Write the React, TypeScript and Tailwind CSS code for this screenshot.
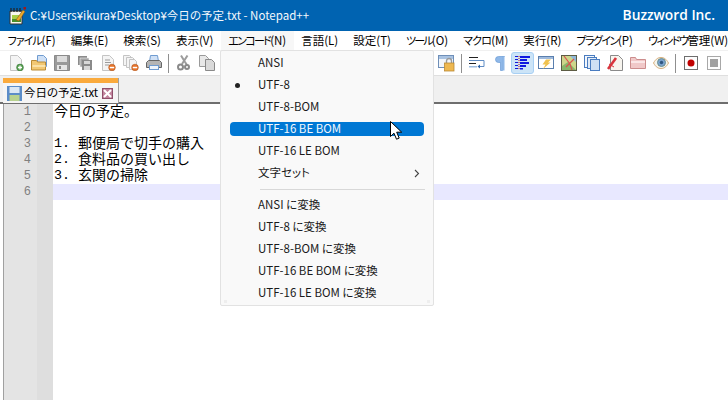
import React from "react";

const Svg = ({ children, w = 16, h = 16 }: { children: React.ReactNode; w?: number; h?: number }) => (
  <svg width={w} height={h} viewBox={`0 0 ${w} ${h}`} className="block shrink-0">
    {children}
  </svg>
);

const Page = ({ fill = "#f4f4f4" }: { fill?: string }) => (
  <path d="M2.5.5h7l4 4v11h-11z" fill={fill} stroke="#c4c4c4" />
);
const Minus = () => (
  <>
    <circle cx="12" cy="12.5" r="3.3" fill="#e8742a" stroke="#b0561c" strokeWidth=".6" />
    <rect x="9.8" y="11.8" width="4.4" height="1.5" fill="#fff" />
  </>
);

const icons: Record<string, React.ReactNode> = {
  newDoc: (
    <Svg>
      <Page />
      <circle cx="12" cy="12.5" r="3.4" fill="#5aa352" stroke="#37733a" strokeWidth=".6" />
      <path d="M10 12.5h4M12 10.5v4" stroke="#fff" strokeWidth="1.3" />
    </Svg>
  ),
  open: (
    <Svg>
      <path d="M6.5 .5h6l3 3v8h-9z" fill="#cfe0f5" stroke="#6f9bd0" />
      <path d="M.5 5.5h5l1 1.500h8v8h-14z" fill="#f2c873" stroke="#b98a35" />
      <path d="M1.500 10h13v2h-13z" fill="#fae2a8" />
    </Svg>
  ),
  save: (
    <Svg>
      <path d="M.5 .5h15v15h-15z" fill="#9a9a9a" stroke="#8a8a8a" />
      <rect x="3" y="1" width="10" height="6" fill="#dcdcdc" />
      <rect x="3" y="10" width="10" height="5" fill="#e6e6e6" />
      <rect x="5" y="11" width="2" height="3" fill="#8a8a8a" />
    </Svg>
  ),
  saveAll: (
    <Svg>
      <path d="M1 1h9v9h-9z" fill="#8c8c8c" />
      <path d="M3 3h9v9h-9z" fill="#a5a5a5" stroke="#f4f4f4" strokeWidth=".6" />
      <path d="M5 5h10v10h-10z" fill="#8a8a8a" />
      <rect x="7" y="6" width="6" height="3" fill="#d8d8d8" />
      <rect x="7" y="11" width="6" height="4" fill="#d8d8d8" />
    </Svg>
  ),
  close: (
    <Svg>
      <Page />
      <path d="M5 5h5M5 7.500h6M5 10h4" stroke="#9a9a9a" />
      <Minus />
    </Svg>
  ),
  closeAll: (
    <Svg>
      <path d="M.5 .5h6l2 2v8h-8z" fill="#f4f4f4" stroke="#c4c4c4" />
      <path d="M3.500 2.500h6l2 2v8h-8z" fill="#f4f4f4" stroke="#c4c4c4" />
      <path d="M6.500 4.500h5l2 2v8h-7z" fill="#f4f4f4" stroke="#c4c4c4" />
      <Minus />
    </Svg>
  ),
  print: (
    <Svg>
      <path d="M4.500 .5h7l1 6h-9z" fill="#cfe0f5" stroke="#6f9bd0" />
      <path d="M.5 7.500l2-2h11l2 2v5h-15z" fill="#b4b4b4" stroke="#666" />
      <rect x="3.500" y="10.500" width="9" height="4" fill="#eef4fb" stroke="#6f9bd0" />
    </Svg>
  ),
  cut: (
    <Svg>
      <path d="M11.500 .5L6 9M5 .5L9 7l2 3" stroke="#9c9c9c" strokeWidth="2" fill="none" />
      <circle cx="4.500" cy="12" r="2.500" fill="none" stroke="#8a8a8a" strokeWidth="2" />
      <circle cx="11" cy="12" r="2" fill="none" stroke="#8a8a8a" strokeWidth="2" />
    </Svg>
  ),
  copy: (
    <Svg>
      <path d="M.5 .5h6l3 3v8h-9z" fill="#e8e8e8" stroke="#9a9a9a" />
      <path d="M6.500 4.500h6l3 3v8h-9z" fill="#dadada" stroke="#8a8a8a" />
    </Svg>
  ),
  lock: (
    <Svg w={17} h={17}>
      <rect x=".5" y=".5" width="15" height="12" fill="#f2f6fb" stroke="#6f8fb8" />
      <rect x="1" y="1" width="14" height="3" fill="#a9c3e2" />
      <path d="M8.500 8V6a2.500 2.500 0 015 0v2" fill="none" stroke="#9a9a9a" strokeWidth="1.400" />
      <rect x="6.500" y="8" width="9.500" height="8" fill="#eeb850" stroke="#b98a35" strokeWidth=".8" />
    </Svg>
  ),
  wrap: (
    <Svg>
      <path d="M0 2.500h9" stroke="#222" />
      <path d="M0 5.500h15v6h-4" stroke="#5f8cc4" fill="none" />
      <path d="M0 8.500h7" stroke="#222" />
      <path d="M0 11h8v1.500h-8z" fill="#9bbbe0" />
      <path d="M11 9.500v4l-2.500-2z" fill="#2d62a8" />
    </Svg>
  ),
  para: (
    <Svg w={10}>
      <path d="M9.500 1.500h-6a3 3 0 000 6h2v8h2v-14h2z" fill="#8fb8e8" stroke="#6c9bd6" strokeWidth=".7" />
      <rect x="7.400" y="1.500" width="2.100" height="14" fill="#8fb8e8" />
    </Svg>
  ),
  indent: (
    <Svg>
      <path d="M4 1v14" stroke="#d02020" strokeDasharray="1 1" />
      <path d="M0 1.500h3M0 4.500h3M0 7.500h3M0 10.500h3M0 13.500h3" stroke="#1018d8" />
      <rect x="5" y="1" width="10" height="2" fill="#1018e0" />
      <rect x="5" y="4" width="7" height="2" fill="#1018e0" />
      <rect x="5" y="7" width="9" height="2" fill="#1018e0" />
      <rect x="5" y="10" width="6" height="2" fill="#1018e0" />
      <rect x="5" y="13" width="3" height="1.500" fill="#1018e0" />
    </Svg>
  ),
  bolt: (
    <Svg>
      <rect x=".5" y="1.500" width="15" height="12" fill="#fff" stroke="#5a7fae" />
      <rect x="1" y="2" width="14" height="2" fill="#9fbadc" />
      <path d="M8 4.500h5l-3 3h2.500L5 14l2.500-4.500H4.500z" fill="#f0c24e" />
    </Svg>
  ),
  map: (
    <Svg>
      <rect x=".5" y=".5" width="15" height="15" fill="#cdd68a" stroke="#5c5c44" />
      <path d="M1 11l6-4 8 8H1z" fill="#88b76b" />
      <path d="M9 1h6v6z" fill="#8fb7d8" />
      <path d="M3 1l6 8 2 6M13 4l-8 8" stroke="#d9534f" strokeWidth="1.200" fill="none" />
    </Svg>
  ),
  docs: (
    <Svg>
      <rect x=".5" y=".5" width="10" height="12" fill="#f2f6fb" stroke="#4a7cc0" />
      <rect x="3.500" y="2.500" width="9" height="11" fill="#e1ebf7" stroke="#4a7cc0" />
      <rect x="6.500" y="4.500" width="9" height="11" fill="#cfe0f5" stroke="#4a7cc0" />
    </Svg>
  ),
  pencil: (
    <Svg>
      <path d="M3.500 .5h8l4 4v11h-12z" fill="#f7f4ee" stroke="#8a8a8a" />
      <path d="M1 14L9 3" stroke="#d8343c" strokeWidth="2.600" />
      <path d="M2 9l5 3" stroke="#d8343c" strokeWidth="1" />
    </Svg>
  ),
  folder: (
    <Svg>
      <path d="M.5 2.500h5l1 2h9v9h-15z" fill="#f0c8c8" stroke="#cc8d8d" />
      <path d="M1 6h14v2H1z" fill="#fae6e6" />
    </Svg>
  ),
  eye: (
    <Svg>
      <path d="M.5 8C3 3.500 5.500 2.500 8 2.500s5 1 7.500 5.500C13 12.500 10.500 13.500 8 13.500S3 12.500.5 8z" fill="#f4f4ee" stroke="#d6ad7a" />
      <circle cx="8.500" cy="7.500" r="4" fill="#7ba3cf" stroke="#6b8f8c" />
      <circle cx="8.500" cy="7.500" r="1.700" fill="#2f5680" />
    </Svg>
  ),
  rec: (
    <Svg w={14} h={14}>
      <rect x=".5" y=".5" width="13" height="13" fill="#fdfdfd" stroke="#6e6e6e" />
      <circle cx="7" cy="7" r="3.500" fill="#c00000" />
    </Svg>
  ),
  stop: (
    <Svg w={14} h={14}>
      <rect x=".5" y=".5" width="13" height="13" fill="#fdfdfd" stroke="#a8a8a8" />
      <rect x="3" y="3" width="8" height="8" fill="#a0a0a0" />
    </Svg>
  ),
};

const Tool = ({ name, active }: { name: string; active?: boolean }) => (
  <div
    className={
      active
        ? "flex h-[22px] w-[23px] items-center justify-center rounded-[3px] border border-[#a8d0f4] bg-[#cce4f7]"
        : "flex h-[22px] w-[23px] items-center justify-center"
    }
  >
    {icons[name]}
  </div>
);

const Sep = () => (
  <div className="flex h-[22px] w-[7px] items-center justify-center">
    <div className="h-[19px] w-px bg-[#8f8f8f]" />
  </div>
);

const menus: [string, string, string][] = [
  ["ファイル", "(F)", "text-[11px] tracking-[-1px]"],
  ["編集", "(E)", ""],
  ["検索", "(S)", ""],
  ["表示", "(V)", ""],
  ["エンコード", "(N)", "text-[11px] tracking-[-1.700px]"],
  ["言語", "(L)", ""],
  ["設定", "(T)", ""],
  ["ツール", "(O)", "text-[11px] tracking-[-1.800px]"],
  ["マクロ", "(M)", "text-[11px] tracking-[-0.800px]"],
  ["実行", "(R)", ""],
  ["プラグイン", "(P)", "text-[11px] tracking-[-1.500px]"],
  ["ウィンドウ", "管理(W)", "text-[11px] tracking-[-1.500px]"],
];

const Row = ({ children }: { children: React.ReactNode }) => (
  <div className="flex h-[22px] items-center pl-[37px]">{children}</div>
);

const code: [string, string][] = [
  ["", "今日の予定。"],
  ["", ""],
  ["1. ", "郵便局で切手の購入"],
  ["2. ", "食料品の買い出し"],
  ["3. ", "玄関の掃除"],
];

export default function App() {
  return (
    <div className="relative flex h-[400px] w-[728px] flex-col overflow-hidden bg-white font-['Noto_Sans_CJK_JP',sans-serif] text-black">
      {/* title bar */}
      <div className="flex h-[31px] shrink-0 items-center justify-between bg-[#0063b1] pl-[9px] pr-[13px] text-white">
        <div className="flex items-center gap-[4px]">
          <svg width="17" height="18" viewBox="0 0 17 18" className="block">
            <path d="M1 4h12v13H1z" fill="#f8f8ee" stroke="#333" />
            <path d="M2 1v4M5 1v4M8 1v4M11 1v4" stroke="#222" strokeWidth="1.200" />
            <path d="M3 8h9v4H3z" fill="#a8cf45" />
            <path d="M3 12h9v3H3z" fill="#4a8f2a" />
            <path d="M7 13L14 3l2 1.500L10 14z" fill="#eda92b" stroke="#7a4c10" strokeWidth=".5" />
            <rect x="14.500" y="0" width="2.500" height="2.500" fill="#a01818" />
          </svg>
          <span className="whitespace-nowrap text-[11.500px] [font-feature-settings:'palt'] text-[#f4f8fc]">
            C:¥Users¥ikura¥Desktop¥今日の予定.txt - Notepad++
          </span>
        </div>
        <span className="font-['Open_Sans',sans-serif] text-[13.800px] font-semibold">Buzzword Inc.</span>
      </div>

      {/* menu bar */}
      <div className="flex h-[19px] shrink-0 items-center overflow-hidden whitespace-nowrap bg-white text-[11.500px] [font-feature-settings:'palt']">
        {menus.map(([m, k, t], i) => (
          <div
            key={m}
            className={
              i === 4
                ? "flex h-[19px] items-center bg-[#f7f7f7] px-[7.500px]"
                : "flex h-[19px] shrink-0 items-center px-[7.500px]"
            }
          >
            <span className={t}>{m}</span>
            <span>{k}</span>
          </div>
        ))}
      </div>

      {/* toolbar */}
      <div className="flex h-[26px] shrink-0 items-center justify-between border-y border-[#dfdfdf] border-t-[#f0f0f0] bg-white pl-[4px] pr-[3px]">
        <div className="flex items-center">
          <Tool name="newDoc" />
          <Tool name="open" />
          <Tool name="save" />
          <Tool name="saveAll" />
          <Tool name="close" />
          <Tool name="closeAll" />
          <Tool name="print" />
          <Sep />
          <Tool name="cut" />
          <Tool name="copy" />
        </div>
        <div className="flex items-center">
          <Tool name="lock" />
          <Sep />
          <Tool name="wrap" />
          <Tool name="para" />
          <Tool name="indent" active />
          <Tool name="bolt" />
          <Tool name="map" />
          <Tool name="docs" />
          <Tool name="pencil" />
          <Tool name="folder" />
          <Tool name="eye" />
          <Sep />
          <Tool name="rec" />
          <Tool name="stop" />
        </div>
      </div>

      {/* tab bar */}
      <div className="flex h-[28px] shrink-0 items-end border-b-2 border-[#6e6e6e] bg-[#f0f0f0] pl-[3px]">
        <div className="-mb-[1px] flex h-[25px] w-[116px] flex-col border-r border-[#a0a0a0] bg-[#f5f5f5]">
          <div className="h-[5px] shrink-0 bg-[#faaa3c]" />
          <div className="flex flex-1 items-center pl-[4px] pr-[5px]">
            <svg width="15" height="15" viewBox="0 0 15 15" className="block shrink-0">
              <rect width="15" height="15" fill="#5c8dc8" />
              <rect x="2.500" y="1" width="10" height="6" fill="#dbe7f5" />
              <rect x="2.500" y="9" width="10" height="6" fill="#b8d28f" />
            </svg>
            <span className="ml-[2px] flex-1 whitespace-nowrap text-[11.500px] [font-feature-settings:'palt']">今日の予定.txt</span>
            <div className="flex h-[11px] w-[11px] items-center justify-center border border-[#8f4f6a] bg-[#c0839c]">
              <svg width="9" height="9" viewBox="0 0 9 9" className="block">
                <path d="M1 1l7 7M8 1L1 8" stroke="#fff" strokeWidth="2" />
              </svg>
            </div>
          </div>
        </div>
      </div>

      {/* editor */}
      <div className="ml-[3px] flex min-h-0 flex-1 border-l border-[#a0a0a0]">
        <div className="w-[33px] shrink-0 bg-[#e4e4e4] pr-[6px] text-right font-['Liberation_Mono',monospace] text-[12px] leading-[16px] text-[#808080]">
          {[1, 2, 3, 4, 5, 6].map((n) => (
            <div key={n} className="h-[16px]">
              {n}
            </div>
          ))}
        </div>
        <div className="w-[16px] shrink-0 bg-[#dedede]" />
        <div className="min-w-0 flex-1 text-[14px]">
          {code.map(([num, text], i) => (
            <div key={i} className="flex h-[16px] items-start whitespace-pre pl-px">
              {num && (
                <span className="w-[24px] font-['Liberation_Mono',monospace] text-[13.330px] leading-[16px]">{num}</span>
              )}
              <span className="leading-[12px]">{text}</span>
            </div>
          ))}
          <div className="h-[16px] bg-[#e8e8ff]" />
        </div>
      </div>

      {/* dropdown */}
      <div className="absolute left-[220px] top-[50px] w-[214px] rounded-[2px] border border-[#e2e2e2] bg-[#f9f9f9] pb-px pt-px text-[11.500px] text-[#1a1a1a] [font-feature-settings:'palt']">
        <Row>ANSI</Row>
        <div className="relative">
          <span className="absolute left-[14px] top-[9px] h-[5px] w-[5px] rounded-full bg-[#222]" />
          <Row>UTF-8</Row>
        </div>
        <Row>UTF-8-BOM</Row>
        <div className="flex h-[22px] items-center px-[9px]">
          <div className="flex h-[14px] flex-1 items-center rounded-[4px] bg-[#0078d4] pl-[28px] text-[#f4f9fd]">UTF-16 BE BOM</div>
        </div>
        <Row>UTF-16 LE BOM</Row>
        <div className="flex h-[22px] items-center justify-between pl-[37px] pr-[13px]">
          <span>文字セット</span>
          <svg width="6" height="9" viewBox="0 0 6 9" className="block">
            <path d="M1 1l3.500 3.500L1 8" fill="none" stroke="#444" strokeWidth="1.100" />
          </svg>
        </div>
        <div className="flex h-[10px] items-center pl-[39px] pr-[8px]">
          <div className="h-px flex-1 bg-[#d8d8d8]" />
        </div>
        <Row>ANSI に変換</Row>
        <Row>UTF-8 に変換</Row>
        <Row>UTF-8-BOM に変換</Row>
        <Row>UTF-16 BE BOM に変換</Row>
        <Row>UTF-16 LE BOM に変換</Row>
        <span className="absolute bottom-[2px] left-[3px] h-[3px] w-[3px] bg-[#eeeeee]" />
        <span className="absolute bottom-[2px] right-[3px] h-[3px] w-[3px] bg-[#eeeeee]" />
      </div>

      {/* mouse pointer */}
      <svg width="14" height="20" viewBox="0 0 14 20" className="absolute left-[390px] top-[121px] block">
        <path d="M.5 .5v15l3.500-3.300 2.500 6 2.700-1.100-2.500-5.900h5z" fill="#fff" stroke="#000" strokeWidth="1" />
      </svg>
    </div>
  );
}
